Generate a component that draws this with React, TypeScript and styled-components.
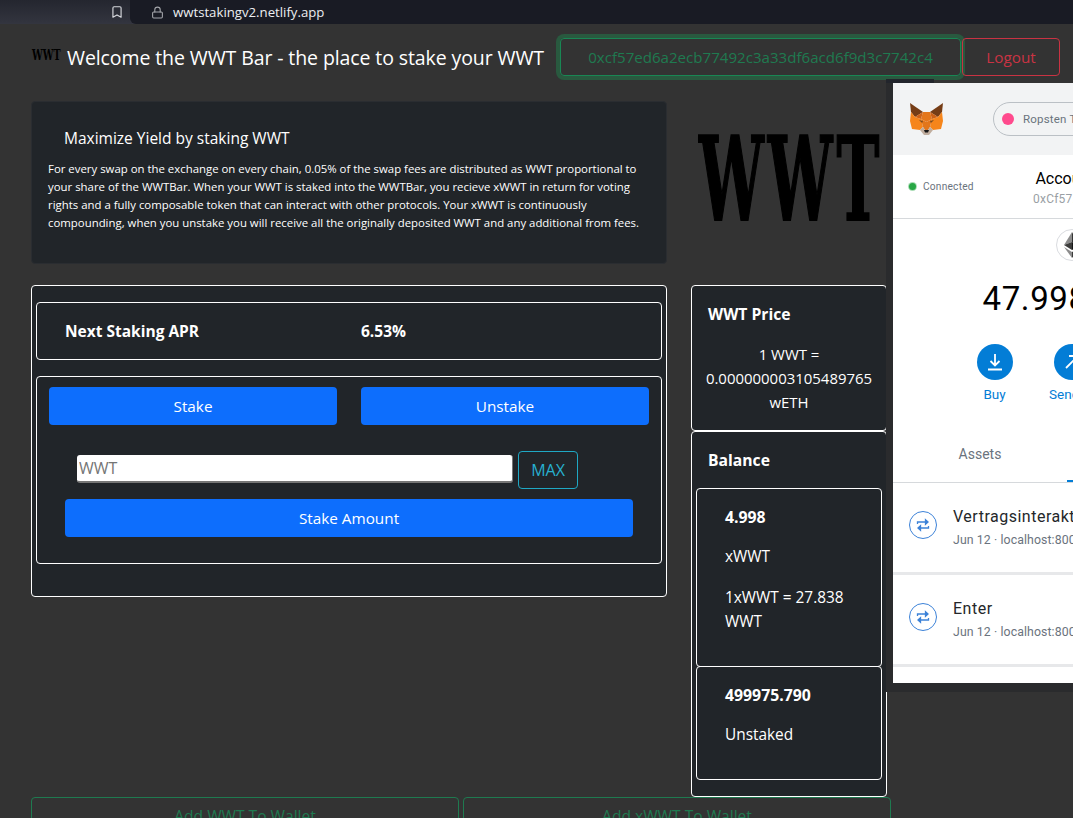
import React from 'react';
import styled, { createGlobalStyle } from 'styled-components';
import { Bookmark, Lock } from 'lucide-react';

const GlobalStyle = createGlobalStyle`
  html, body {
    margin: 0;
    padding: 0;
    background: #333333;
  }
  * {
    box-sizing: border-box;
  }
`;

const Page = styled.div`
  position: relative;
  width: 1073px;
  height: 818px;
  overflow: hidden;
  background: #333333;
  color: #ffffff;
  font-family: 'Open Sans', 'Liberation Sans', sans-serif;
  font-size: 15.3px;
  line-height: 24px;
`;

const BrowserBar = styled.div`
  display: flex;
  align-items: center;
  height: 24px;
  background: linear-gradient(#24262f, #33353f);
`;

const BookmarkSlot = styled.div`
  display: flex;
  justify-content: flex-end;
  width: 130px;
  padding-right: 6px;
  color: #d5d7dc;
`;

const UrlBox = styled.div`
  display: flex;
  flex: 1;
  align-items: center;
  gap: 9px;
  height: 24px;
  padding-left: 21px;
  background: #191b24;
  border-bottom-left-radius: 6px;
  color: #eceef1;
  font-size: 13.2px;
`;

const LockSlot = styled.span`
  display: flex;
  color: #a4a6ab;
`;

const Header = styled.header`
  display: flex;
  align-items: center;
  height: 38px;
  margin-top: 14px;
  padding: 0 13px 0 32px;
`;

const BrandMark = styled.span`
  display: inline-block;
  color: #000000;
  font-family: 'DejaVu Serif', serif;
  font-weight: 700;
  transform-origin: left center;
`;

const SmallMark = styled(BrandMark)`
  width: 35px;
  font-size: 14px;
  line-height: 14px;
  margin-top: -4px;
  transform: scaleX(0.68);
`;

const Title = styled.h1`
  margin: 2px 0 0;
  font-size: 19.5px;
  font-weight: 400;
  letter-spacing: -0.1px;
  white-space: nowrap;
`;

const AddressButton = styled.button`
  width: 401px;
  height: 38px;
  margin-left: auto;
  background: transparent;
  border: 1px solid #198754;
  border-radius: 4px;
  box-shadow: 0 0 0 4px #29593f;
  color: #1f7a50;
  font: inherit;
  font-size: 15.1px;
`;

const LogoutButton = styled.button`
  width: 98px;
  height: 38px;
  margin-left: 1px;
  background: transparent;
  border: 1px solid #c93343;
  border-radius: 4px;
  color: #c93343;
  font: inherit;
`;

const Main = styled.main`
  display: grid;
  grid-template-columns: 636px 196px;
  grid-template-rows: 163px auto;
  column-gap: 24px;
  row-gap: 21px;
  margin: 25px 0 0 31px;
`;

const InfoCard = styled.section`
  padding: 23px 16px 0;
  background: #212529;
  border: 1px solid #2a2d31;
  border-radius: 4px;
`;

const InfoTitle = styled.h2`
  margin: 0 0 9px 16px;
  font-size: 15.5px;
  font-weight: 400;
  line-height: 26px;
`;

const InfoText = styled.p`
  margin: 0;
  font-size: 11.4px;
  line-height: 18px;
  white-space: nowrap;
`;

const LogoSlot = styled.div`
  display: flex;
  align-items: center;
  padding: 0 0 8px 8px;
`;

const LargeMark = styled(BrandMark)`
  font-size: 116px;
  line-height: 116px;
  letter-spacing: 8px;
  transform: scaleX(0.497);
  -webkit-text-stroke: 2px #000000;
`;

const StakingCard = styled.section`
  display: flex;
  flex-direction: column;
  gap: 16px;
  align-self: start;
  padding: 16px 4px 32px;
  background: #212529;
  border: 1px solid #ffffff;
  border-radius: 4px;
`;

const AprBox = styled.div`
  display: grid;
  grid-template-columns: 296px auto;
  align-items: center;
  justify-content: start;
  height: 58px;
  padding-left: 28px;
  border: 1px solid #ffffff;
  border-radius: 4px;
  font-size: 15.5px;
  font-weight: 700;
`;

const ActionBox = styled.div`
  display: flex;
  flex-direction: column;
  padding: 10px 12px 26px;
  border: 1px solid #ffffff;
  border-radius: 4px;
`;

const TabRow = styled.div`
  display: grid;
  grid-template-columns: 288px 288px;
  gap: 24px;
  margin-bottom: 26px;
`;

const PrimaryButton = styled.button`
  height: 38px;
  background: #0d6efd;
  border: 0;
  border-radius: 4px;
  color: #ffffff;
  font: inherit;
`;

const InputRow = styled.div`
  display: flex;
  align-items: flex-start;
  gap: 5px;
  margin: 0 0 10px 28px;
`;

const AmountInput = styled.input`
  width: 436px;
  height: 28px;
  margin-top: 4px;
  padding: 0 2px;
  background: #ffffff;
  border: 0;
  border-right: 1px solid #767676;
  border-bottom: 2px solid #767676;
  border-radius: 3px;
  font-family: inherit;
  font-size: 16px;
  &::placeholder {
    color: #757575;
    opacity: 1;
  }
`;

const MaxButton = styled.button`
  width: 60px;
  height: 38px;
  background: transparent;
  border: 1px solid #1fa8c4;
  border-radius: 4px;
  color: #27b0cf;
  font: inherit;
  font-size: 16px;
`;

const SubmitRow = styled.div`
  display: grid;
  grid-template-columns: 568px;
  margin-left: 16px;
`;

const SideColumn = styled.aside`
  display: flex;
  flex-direction: column;
`;

const PriceCard = styled.section`
  padding: 16px;
  height: 146px;
  background: #212529;
  border: 1px solid #ffffff;
  border-radius: 4px;
`;

const SideHeading = styled.h3`
  margin: 0 0 16px;
  font-size: 15.7px;
  font-weight: 700;
  line-height: 24px;
`;

const PriceText = styled.p`
  margin: 0 -8px;
  text-align: center;
  font-size: 14.95px;
`;

const BalanceCard = styled.section`
  padding: 16px 4px;
  background: #212529;
  border: 1px solid #ffffff;
  border-radius: 4px;
  ${SideHeading} {
    margin: 0 0 16px 12px;
  }
`;

const BalanceBox = styled.div`
  padding: 16px 28px;
  border: 1px solid #ffffff;
  border-radius: 4px;
  & + & {
    margin-top: -1px;
  }
`;

const BalanceLine = styled.p<{ $strong?: boolean }>`
  margin: 0 0 16.25px;
  font-weight: ${(p) => (p.$strong ? 700 : 400)};
  font-size: ${(p) => (p.$strong ? '15.8px' : '15.4px')};
`;

const WalletRow = styled.div`
  display: grid;
  grid-template-columns: 428px 428px;
  gap: 4px;
  margin-left: 31px;
`;

const WalletButton = styled.button`
  height: 38px;
  background: transparent;
  border: 1px solid #1f7a50;
  border-radius: 4px;
  color: #1f7a50;
  font: inherit;
  font-size: 15.6px;
`;

const PopupTab = styled.div`
  position: absolute;
  top: 79px;
  left: 886px;
  width: 48px;
  height: 4px;
  background: #22252c;
`;

const Popup = styled.div`
  position: absolute;
  top: 83px;
  left: 893px;
  width: 357px;
  height: 600px;
  background: #ffffff;
  box-shadow: -7px 0 0 #2a2b2d, 0 9px 0 #2a2b2d, -7px 9px 0 #2a2b2d;
  color: #24272a;
  font-family: Roboto, 'Liberation Sans', sans-serif;
`;

const PopupHeader = styled.div`
  display: flex;
  align-items: center;
  height: 72px;
  padding-left: 17px;
  background: #f2f3f4;
`;

const NetworkPill = styled.div`
  display: flex;
  align-items: center;
  gap: 9px;
  width: 170px;
  height: 34px;
  margin-left: 50px;
  padding-left: 8px;
  border: 1px solid #bbc0c5;
  border-radius: 17px;
  color: #6a737d;
  font-size: 11.5px;
  letter-spacing: 0.2px;
`;

const NetworkDot = styled.span`
  width: 12px;
  height: 12px;
  background: #ff4a8d;
  border-radius: 50%;
`;

const AccountRow = styled.div`
  display: grid;
  grid-template-columns: 1fr auto 1fr;
  align-items: center;
  height: 64px;
  border-bottom: 1px solid #d6d9dc;
`;

const Connected = styled.div`
  display: flex;
  align-items: center;
  gap: 7px;
  margin-left: 16px;
  color: #6a737d;
  font-size: 10.2px;
  letter-spacing: 0.2px;
`;

const ConnectedDot = styled.span`
  width: 7px;
  height: 7px;
  background: #28a745;
  border-radius: 50%;
  box-shadow: 0 0 0 1px #a9dcb5;
`;

const AccountBlock = styled.div`
  padding-top: 2px;
`;

const AccountName = styled.div`
  font-size: 16px;
  line-height: 22px;
  text-align: center;
  color: #000000;
`;

const AccountAddress = styled.div`
  color: #9a9fa5;
  font-size: 12px;
  line-height: 18px;
  letter-spacing: 0.2px;
  text-align: center;
`;

const TokenBadge = styled.div`
  display: flex;
  align-items: center;
  justify-content: center;
  width: 32px;
  height: 32px;
  margin: 10px auto 0;
  border: 1px solid #dadce0;
  border-radius: 50%;
`;

const Amount = styled.div`
  margin-top: 16px;
  font-size: 33px;
  line-height: 44px;
  letter-spacing: 0.6px;
  text-align: center;
  color: #000000;
  white-space: nowrap;
`;

const ActionRow = styled.div`
  display: flex;
  justify-content: center;
  gap: 37px;
  margin-top: 23px;
`;

const ActionItem = styled.div`
  display: flex;
  flex-direction: column;
  align-items: center;
  width: 40px;
  color: #037dd6;
  font-size: 13.5px;
  line-height: 20px;
`;

const ActionCircle = styled.span`
  display: flex;
  align-items: center;
  justify-content: center;
  width: 36px;
  height: 36px;
  margin-bottom: 4px;
  background: #037dd6;
  border-radius: 50%;
`;

const Tabs = styled.div`
  display: grid;
  grid-template-columns: 174px 183px;
  height: 49px;
  margin-top: 30px;
  border-bottom: 1px solid #d6d9dc;
`;

const PopupTabItem = styled.div<{ $active?: boolean }>`
  padding-top: 8px;
  text-align: center;
  color: ${(p) => (p.$active ? '#037dd6' : '#6a737d')};
  font-size: 14px;
  border-bottom: ${(p) => (p.$active ? '2px solid #037dd6' : '0')};
`;

const ActivityRow = styled.div`
  display: flex;
  align-items: center;
  gap: 16px;
  height: 92px;
  padding: 0 0 6px 16px;
  border-bottom: 3px solid #e7e8ea;
  white-space: nowrap;
`;

const ActivityIcon = styled.span`
  display: flex;
  align-items: center;
  justify-content: center;
  flex: none;
  width: 28px;
  height: 28px;
  border: 1px solid #3c82d8;
  border-radius: 50%;
`;

const ActivityText = styled.div`
  padding-top: 7px;
`;

const ActivityTitle = styled.div`
  font-size: 16px;
  line-height: 22px;
  letter-spacing: 0.5px;
`;

const ActivityMeta = styled.div`
  margin-top: 2px;
  color: #6a737d;
  font-size: 12.3px;
  line-height: 20px;
  letter-spacing: 0.1px;
`;

const RepeatIcon = () => (
  <svg width="16" height="16" viewBox="0 0 16 16" fill="none" stroke="#3c82d8" strokeWidth="1.3">
    <path d="M2.5 7V5h10" />
    <path d="M10.5 2.8 13 5l-2.5 2.2z" fill="#3c82d8" />
    <path d="M13.5 9v2h-10" />
    <path d="M5.5 8.8 3 11l2.5 2.2z" fill="#3c82d8" />
  </svg>
);

const FoxLogo = () => (
  <svg width="33" height="32" viewBox="0 0 33 32">
    <polygon points="0,0 13,9 5,14 1,9" fill="#763d16" />
    <polygon points="33,0 20,9 28,14 32,9" fill="#763d16" />
    <polygon points="13,9 20,9 22,16 16.5,19 11,16" fill="#e4761b" />
    <polygon points="1,9 5,14 11,16 13,24 10,27 2,26 0,18" fill="#f6851b" />
    <polygon points="32,9 28,14 22,16 20,24 23,27 31,26 33,18" fill="#f6851b" />
    <polygon points="5,14 13,9 11,16" fill="#cd6116" />
    <polygon points="28,14 20,9 22,16" fill="#cd6116" />
    <polygon points="11,16 16.5,19 22,16 20,24 18,27 15,27 13,24" fill="#e2761b" />
    <polygon points="9,17 13,18 12,20" fill="#7a4a1e" />
    <polygon points="24,17 20,18 21,20" fill="#7a4a1e" />
    <polygon points="10,27 13,24 15,27 18,27 20,24 23,27 19,32 14,32" fill="#c0ad9e" />
    <polygon points="14,27 19,27 18,29.5 15,29.5" fill="#161616" />
  </svg>
);

const EthLogo = () => (
  <svg width="16" height="26" viewBox="0 0 16 26">
    <polygon points="8,0 0,13 8,10" fill="#8c8c8c" />
    <polygon points="8,0 16,13 8,10" fill="#343434" />
    <polygon points="0,13 8,18 8,10" fill="#3c3c3b" />
    <polygon points="16,13 8,18 8,10" fill="#141414" />
    <polygon points="0,15 8,26 8,20" fill="#8c8c8c" />
    <polygon points="16,15 8,26 8,20" fill="#3c3c3b" />
  </svg>
);

const BuyIcon = () => (
  <svg width="18" height="18" viewBox="0 0 18 18" fill="none" stroke="#ffffff" strokeWidth="1.8">
    <path d="M9 1v11M4.5 8 9 12.5 13.5 8M2 16.5h14" />
  </svg>
);

const SendIcon = () => (
  <svg width="18" height="18" viewBox="0 0 18 18" fill="none" stroke="#ffffff" strokeWidth="1.8">
    <path d="M3 15 15 3M6 3h9v9" />
  </svg>
);

const SwapIcon = () => (
  <svg width="18" height="18" viewBox="0 0 18 18" fill="none" stroke="#ffffff" strokeWidth="1.8">
    <path d="M2 6h13M11 2l4 4M16 12H3M7 16l-4-4" />
  </svg>
);

export default function App(): React.ReactElement {
  return (
    <Page>
      <GlobalStyle />
      <BrowserBar>
        <BookmarkSlot>
          <Bookmark size={14} strokeWidth={2} />
        </BookmarkSlot>
        <UrlBox>
          <LockSlot>
            <Lock size={13} strokeWidth={2} />
          </LockSlot>
          wwtstakingv2.netlify.app
        </UrlBox>
      </BrowserBar>

      <Header>
        <SmallMark>WWT</SmallMark>
        <Title>Welcome the WWT Bar - the place to stake your WWT</Title>
        <AddressButton>0xcf57ed6a2ecb77492c3a33df6acd6f9d3c7742c4</AddressButton>
        <LogoutButton>Logout</LogoutButton>
      </Header>

      <Main>
        <InfoCard>
          <InfoTitle>Maximize Yield by staking WWT</InfoTitle>
          <InfoText>
            For every swap on the exchange on every chain, 0.05% of the swap fees are distributed as WWT proportional to
            <br />
            your share of the WWTBar. When your WWT is staked into the WWTBar, you recieve xWWT in return for voting
            <br />
            rights and a fully composable token that can interact with other protocols. Your xWWT is continuously
            <br />
            compounding, when you unstake you will receive all the originally deposited WWT and any additional from fees.
          </InfoText>
        </InfoCard>
        <LogoSlot>
          <LargeMark>WWT</LargeMark>
        </LogoSlot>

        <StakingCard>
          <AprBox>
            <span>Next Staking APR</span>
            <span>6.53%</span>
          </AprBox>
          <ActionBox>
            <TabRow>
              <PrimaryButton>Stake</PrimaryButton>
              <PrimaryButton>Unstake</PrimaryButton>
            </TabRow>
            <InputRow>
              <AmountInput placeholder="WWT" />
              <MaxButton>MAX</MaxButton>
            </InputRow>
            <SubmitRow>
              <PrimaryButton>Stake Amount</PrimaryButton>
            </SubmitRow>
          </ActionBox>
        </StakingCard>

        <SideColumn>
          <PriceCard>
            <SideHeading>WWT Price</SideHeading>
            <PriceText>
              1 WWT =
              <br />
              0.000000003105489765
              <br />
              wETH
            </PriceText>
          </PriceCard>
          <BalanceCard>
            <SideHeading>Balance</SideHeading>
            <BalanceBox>
              <BalanceLine $strong>4.998</BalanceLine>
              <BalanceLine>xWWT</BalanceLine>
              <BalanceLine>1xWWT = 27.838 WWT</BalanceLine>
            </BalanceBox>
            <BalanceBox>
              <BalanceLine $strong>499975.790</BalanceLine>
              <BalanceLine>Unstaked</BalanceLine>
            </BalanceBox>
          </BalanceCard>
        </SideColumn>
      </Main>

      <WalletRow>
        <WalletButton>Add WWT To Wallet</WalletButton>
        <WalletButton>Add xWWT To Wallet</WalletButton>
      </WalletRow>

      <PopupTab />
      <Popup>
        <PopupHeader>
          <FoxLogo />
          <NetworkPill>
            <NetworkDot />
            Ropsten Testnet
          </NetworkPill>
        </PopupHeader>
        <AccountRow>
          <Connected>
            <ConnectedDot />
            Connected
          </Connected>
          <AccountBlock>
            <AccountName>Account 1</AccountName>
            <AccountAddress>0xCf57...42c4</AccountAddress>
          </AccountBlock>
        </AccountRow>
        <TokenBadge>
          <EthLogo />
        </TokenBadge>
        <Amount>47.998 ETH</Amount>
        <ActionRow>
          <ActionItem>
            <ActionCircle>
              <BuyIcon />
            </ActionCircle>
            Buy
          </ActionItem>
          <ActionItem>
            <ActionCircle>
              <SendIcon />
            </ActionCircle>
            Senden
          </ActionItem>
          <ActionItem>
            <ActionCircle>
              <SwapIcon />
            </ActionCircle>
            Swap
          </ActionItem>
        </ActionRow>
        <Tabs>
          <PopupTabItem>Assets</PopupTabItem>
          <PopupTabItem $active>Aktivität</PopupTabItem>
        </Tabs>
        <ActivityRow>
          <ActivityIcon>
            <RepeatIcon />
          </ActivityIcon>
          <ActivityText>
            <ActivityTitle>Vertragsinteraktion</ActivityTitle>
            <ActivityMeta>Jun 12 · localhost:8000</ActivityMeta>
          </ActivityText>
        </ActivityRow>
        <ActivityRow>
          <ActivityIcon>
            <RepeatIcon />
          </ActivityIcon>
          <ActivityText>
            <ActivityTitle>Enter</ActivityTitle>
            <ActivityMeta>Jun 12 · localhost:8000</ActivityMeta>
          </ActivityText>
        </ActivityRow>
      </Popup>
    </Page>
  );
}
